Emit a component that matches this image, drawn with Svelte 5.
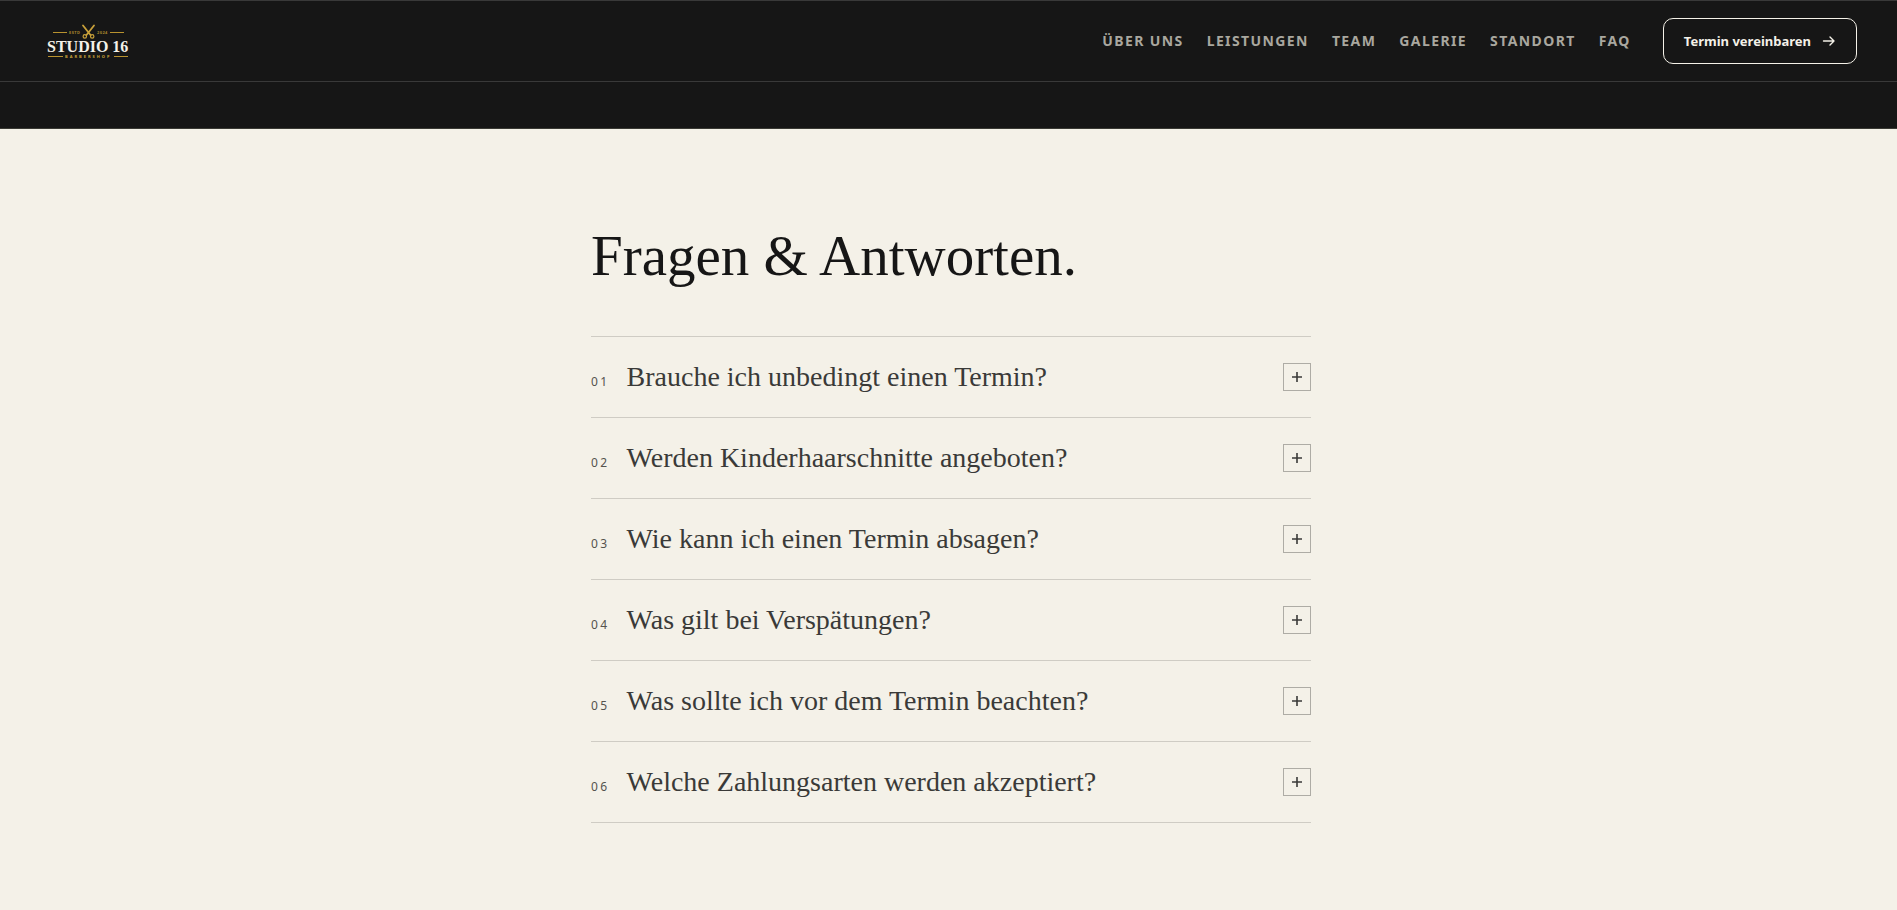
<script>
  const links = [
    { label: "Über uns", href: "#ueber-uns" },
    { label: "Leistungen", href: "#leistungen" },
    { label: "Team", href: "#team" },
    { label: "Galerie", href: "#galerie" },
    { label: "Standort", href: "#standort" },
    { label: "FAQ", href: "#faq" }
  ];

  const questions = [
    "Brauche ich unbedingt einen Termin?",
    "Werden Kinderhaarschnitte angeboten?",
    "Wie kann ich einen Termin absagen?",
    "Was gilt bei Verspätungen?",
    "Was sollte ich vor dem Termin beachten?",
    "Welche Zahlungsarten werden akzeptiert?"
  ];

  const pad = n => String(n).padStart(2, "0");
</script>

<header class="header">
  <a class="logo" href="#top" aria-label="Studio 16 Barbershop">
    <svg width="84" height="40" viewBox="0 0 84 40">
      <g stroke="#b8922f" stroke-width="1">
        <path d="M6 11.5h14M63 11.5h14M1 35.5h15M67 35.5h14" />
      </g>
      <g fill="none" stroke="#c9a13a" stroke-linecap="round">
        <path d="M36 4.5l7.5 9.5M47 4.5l-7.5 9.5" stroke-width="1.8" />
        <circle cx="37.8" cy="15.4" r="1.7" stroke-width="1.2" />
        <circle cx="45.2" cy="15.4" r="1.7" stroke-width="1.2" />
      </g>
      <text class="small" x="22" y="13">ESTD</text>
      <text class="small" x="50" y="13">2024</text>
      <text class="name" x="0" y="31">STUDIO 16</text>
      <text class="shop" x="18" y="37">BARBERSHOP</text>
    </svg>
  </a>

  <nav class="nav">
    {#each links as link}
      <a href={link.href}>{link.label}</a>
    {/each}
  </nav>

  <a class="cta" href="#termin">
    Termin vereinbaren
    <svg width="14" height="14" viewBox="0 0 14 14">
      <path d="M1.5 7h10.5M8 3l4 4-4 4" />
    </svg>
  </a>
</header>

<main>
  <div class="previous"></div>

  <section class="faq" id="faq">
    <div class="inner">
      <h2>Fragen &amp; Antworten.</h2>

      <ul class="list">
        {#each questions as question, i}
          <li>
            <button class="question" type="button" aria-expanded="false">
              <span class="text">
                <span class="number">{pad(i + 1)}</span>
                <span>{question}</span>
              </span>
              <span class="toggle">
                <svg width="12" height="12" viewBox="0 0 12 12">
                  <path d="M1 6h10M6 1v10" />
                </svg>
              </span>
            </button>
          </li>
        {/each}
      </ul>
    </div>
  </section>
</main>

<style>
  :global(body) {
    background: #f4f1e8;
    font-family: "Noto Sans", sans-serif;
  }

  * {
    box-sizing: border-box;
  }

  .header {
    display: flex;
    align-items: center;
    padding: 17px 40px;
    border-top: 1px solid #393939;
    border-bottom: 1px solid #393939;
    background: #161616;
  }

  .logo {
    margin: 0 auto 0 7px;
  }

  .logo svg {
    display: block;
  }

  .name {
    fill: #f4f1e8;
    font: bold 16px "Liberation Serif", serif;
  }

  .small {
    fill: #a8852c;
    font: bold 4px "Noto Sans", sans-serif;
    letter-spacing: 0.1em;
  }

  .shop {
    fill: #c9a13a;
    font: bold 4px "Noto Sans", sans-serif;
    letter-spacing: 0.5em;
  }

  .nav {
    display: flex;
    gap: 23px;
    margin-right: 32px;
  }

  .nav a {
    color: #a9a79f;
    font-size: 14px;
    font-weight: 700;
    letter-spacing: 0.1em;
    line-height: 20px;
    text-decoration: none;
    text-transform: uppercase;
  }

  .cta {
    display: flex;
    align-items: center;
    gap: 11px;
    height: 46px;
    padding: 0 20px;
    border: 1px solid #f4f1e8;
    border-radius: 10px;
    color: #f4f1e8;
    font-size: 13px;
    font-weight: 700;
    text-decoration: none;
  }

  .cta path {
    fill: none;
    stroke: currentColor;
    stroke-width: 1.4;
    stroke-linecap: round;
    stroke-linejoin: round;
  }

  .previous {
    height: 47px;
    border-bottom: 1px solid #3a3a34;
    background: #161616;
  }

  .faq {
    padding: 95px 40px 80px 45px;
    background: #f4f1e8;
  }

  .inner {
    max-width: 720px;
    margin: 0 auto;
  }

  h2 {
    margin: 0 0 48px;
    color: #161616;
    font: 400 57px/64px "Liberation Serif", serif;
  }

  .list {
    margin: 0;
    padding: 0;
    border-top: 1px solid #cfccc4;
    list-style: none;
  }

  li {
    border-bottom: 1px solid #cfccc4;
  }

  .question {
    display: flex;
    align-items: center;
    justify-content: space-between;
    width: 100%;
    padding: 26px 0;
    border: 0;
    background: none;
    color: #3a3a38;
    font: 400 28px/28px "Liberation Serif", serif;
    text-align: left;
    cursor: pointer;
  }

  .text {
    display: flex;
    align-items: baseline;
    gap: 17px;
  }

  .number {
    color: #55534e;
    font: 400 12px/16px "Noto Sans", sans-serif;
    letter-spacing: 0.2em;
  }

  .toggle {
    display: grid;
    place-items: center;
    width: 28px;
    height: 28px;
    border: 1px solid #aeaca5;
  }

  .toggle path {
    stroke: #3a3a38;
    stroke-width: 1.6;
  }
</style>
